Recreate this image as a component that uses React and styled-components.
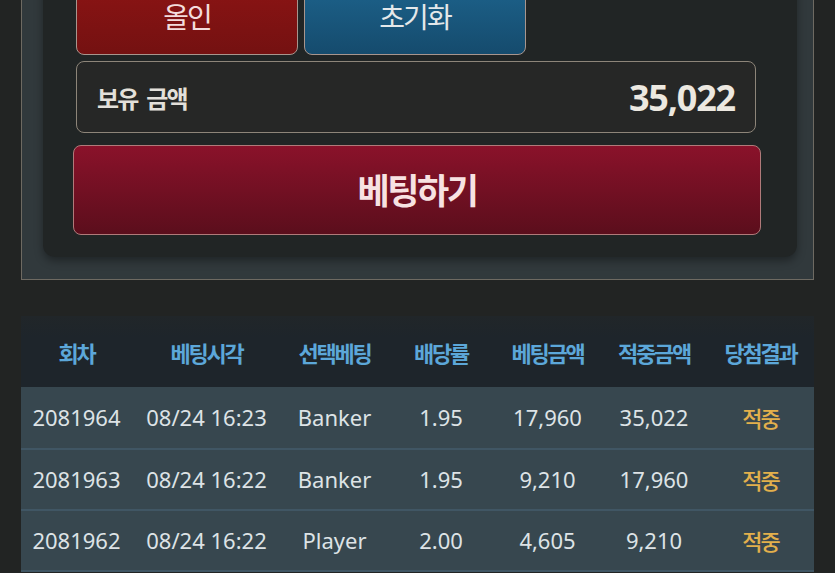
import React from "react";
import styled, { createGlobalStyle } from "styled-components";

const GlobalStyle = createGlobalStyle`
  html, body {
    margin: 0;
    padding: 0;
    background: #222423;
    overflow: hidden;
  }
  body {
    font-family: "Noto Sans", "Noto Sans CJK KR", sans-serif;
    color: #dde3e6;
  }
`;

const Page = styled.div`
  margin-top: -40px;
  padding: 0 21px;
`;

const OuterPanel = styled.section`
  background: #31393c;
  border: 1px solid #6e6a62;
  padding: 0 16px 22px 21px;
`;

const InnerPanel = styled.div`
  background: #212525;
  border-radius: 0 0 12px 12px;
  box-shadow: 0 4px 8px rgba(0, 0, 0, 0.35);
  padding: 20px 36px 22px 30px;
`;

const ButtonRow = styled.div`
  display: flex;
  gap: 6px;
  margin-left: 3px;
`;

const QuickButton = styled.button`
  width: 222px;
  height: 74px;
  border-radius: 8px;
  border: 1.5px solid #a8958d;
  background: ${p =>
    p.$tone === "blue"
      ? "linear-gradient(#1d638c, #154b6d)"
      : "linear-gradient(#8c1414, #741111)"};
  color: ${p => (p.$tone === "blue" ? "#e4e8ea" : "#f3dcdc")};
  font-family: "Noto Sans CJK KR", sans-serif;
  font-size: 28px;
  letter-spacing: -2px;
  padding: 0 0 4px;
`;

const BalanceBox = styled.div`
  display: flex;
  align-items: center;
  justify-content: space-between;
  height: 72px;
  box-sizing: border-box;
  margin: 6px 5px 0 3px;
  padding: 0 20px;
  background: #262726;
  border: 1.5px solid #8d8579;
  border-radius: 8px;
`;

const BalanceLabel = styled.span`
  font-family: "Noto Sans CJK KR", sans-serif;
  font-weight: 700;
  font-size: 24px;
  letter-spacing: -1.8px;
  word-spacing: 5px;
  color: #e3e0da;
`;

const BalanceValue = styled.span`
  font-family: "Noto Sans", sans-serif;
  font-weight: 700;
  font-size: 36px;
  letter-spacing: -1.2px;
  color: #ece8e0;
`;

const BetButton = styled.button`
  display: block;
  width: 100%;
  height: 90px;
  margin-top: 12px;
  border-radius: 8px;
  border: 1.5px solid #b07a7a;
  background: linear-gradient(#8a122a, #5b0e1c);
  color: #f7e2e2;
  font-family: "Noto Sans CJK KR", sans-serif;
  font-weight: 700;
  font-size: 35px;
  letter-spacing: -2.5px;
  padding: 0 0 4px;
`;

const Table = styled.div`
  margin-top: 36px;
`;

const columns = "111px 149px 107px 106px 107px 106px 1fr";

const HeadRow = styled.div`
  display: grid;
  grid-template-columns: ${columns};
  align-items: center;
  height: 71px;
  background: linear-gradient(#212629, #1e252b 30%);
`;

const HeadCell = styled.div`
  text-align: center;
  font-family: "Noto Sans CJK KR", sans-serif;
  font-weight: 700;
  font-size: 22px;
  letter-spacing: -2.2px;
  color: #5ca7d9;
`;

const Body = styled.div`
  border-bottom: 2px solid #405664;
`;

const Row = styled.div`
  display: grid;
  grid-template-columns: ${columns};
  align-items: center;
  height: 59px;
  background: #37474f;
  border-top: 2px solid #405664;
  &:first-of-type {
    height: 61px;
    border-top: none;
  }
`;

const Cell = styled.div`
  text-align: center;
  font-size: 22px;
  padding-bottom: 2px;
  color: ${p => (p.$hit ? "#e3b04c" : "#dde3e6")};
  ${p =>
    p.$hit &&
    `
    font-family: "Noto Sans CJK KR", sans-serif;
    font-weight: 500;
    letter-spacing: -2px;
  `}
`;

const headers = ["회차", "베팅시각", "선택베팅", "배당률", "베팅금액", "적중금액", "당첨결과"];

const rows = [
  ["2081964", "08/24 16:23", "Banker", "1.95", "17,960", "35,022", "적중"],
  ["2081963", "08/24 16:22", "Banker", "1.95", "9,210", "17,960", "적중"],
  ["2081962", "08/24 16:22", "Player", "2.00", "4,605", "9,210", "적중"],
];

const App = () => {
  return (
    <Page>
      <GlobalStyle />
      <OuterPanel>
        <InnerPanel>
          <ButtonRow>
            <QuickButton $tone="red">올인</QuickButton>
            <QuickButton $tone="blue">초기화</QuickButton>
          </ButtonRow>
          <BalanceBox>
            <BalanceLabel>보유 금액</BalanceLabel>
            <BalanceValue>35,022</BalanceValue>
          </BalanceBox>
          <BetButton>베팅하기</BetButton>
        </InnerPanel>
      </OuterPanel>
      <Table>
        <HeadRow>
          {headers.map(h => (
            <HeadCell key={h}>{h}</HeadCell>
          ))}
        </HeadRow>
        <Body>
          {rows.map(r => (
            <Row key={r[0]}>
              {r.map((v, i) => (
                <Cell key={i} $hit={i === 6}>
                  {v}
                </Cell>
              ))}
            </Row>
          ))}
        </Body>
      </Table>
    </Page>
  );
};

export default App;
